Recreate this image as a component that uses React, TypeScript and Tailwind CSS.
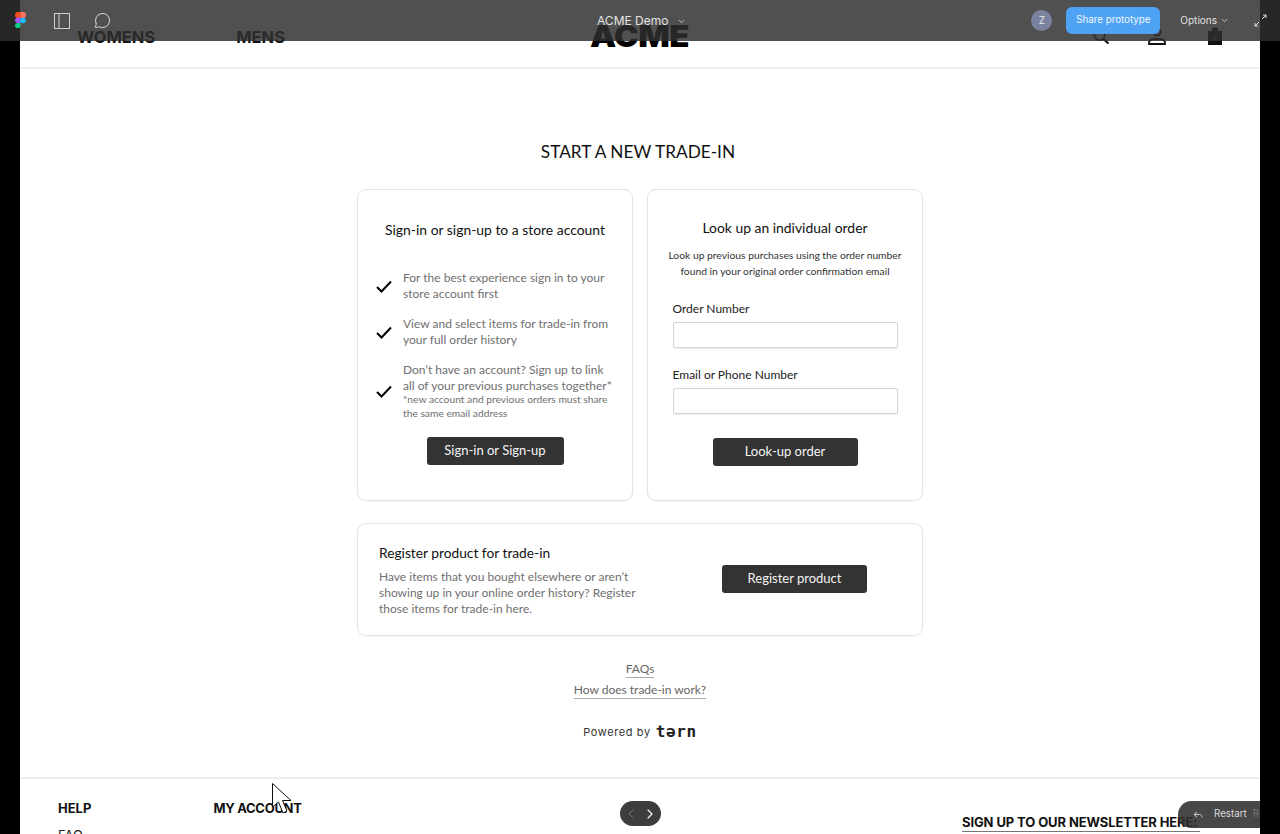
import { ReactElement } from "react";
import { ChevronDown, ChevronLeft, ChevronRight, MessageCircle } from "lucide-react";

const lato = "font-['Lato','Liberation_Sans',sans-serif]";

function Check(): ReactElement {
  return (
    <svg width="16" height="13" viewBox="0 0 16 13" fill="none" className="shrink-0">
      <path d="M1 7l4.5 4.5L15 1.5" stroke="#000" strokeWidth="2" />
    </svg>
  );
}

function DarkButton({ label, width }: { label: string; width: string }): ReactElement {
  return (
    <button className={`${width} h-[28px] bg-[#333333] rounded-[3px] text-[#f5f5f5] text-[13px] text-center`}>
      {label}
    </button>
  );
}

function Field({ label }: { label: string }): ReactElement {
  return (
    <div className="flex flex-col">
      <label className="text-[12px] leading-[17px] text-[#222222] mb-[5px]">{label}</label>
      <input
        type="text"
        className="w-[225px] h-[26px] border border-[#d4d4d4] rounded-[2px] shadow-[0_1px_1px_rgba(0,0,0,0.08)]"
      />
    </div>
  );
}

function Header(): ReactElement {
  return (
    <header className="h-[69px] shrink-0 border-b-2 border-[#eeeeee] flex items-start justify-between pt-[23px] pl-[57px] pr-[38px] relative">
      <nav className="flex gap-[81px] font-['Inter',sans-serif] font-bold text-[16.5px] leading-[29px] text-[#111111]">
        <span>WOMENS</span>
        <span>MENS</span>
      </nav>
      <div className="absolute left-[570px] top-[17px] origin-left font-['Inter',sans-serif] font-black text-[30px] leading-[38px] text-black tracking-[-0.5px] scale-x-[1.1]">
        ACME
      </div>
      <div className="flex items-center h-[26px]">
        <svg width="16" height="15" viewBox="0 0 16 15" fill="none">
          <circle cx="6.5" cy="6" r="5.2" stroke="#111" strokeWidth="1.6" />
          <path d="M10.5 10l5 4.5" stroke="#111" strokeWidth="2.2" />
        </svg>
        <svg width="18" height="18" viewBox="0 0 18 18" fill="none" className="ml-[39px]">
          <circle cx="9" cy="5" r="3.6" stroke="#111" strokeWidth="1.8" />
          <path d="M1 17v-1.5c0-2 3-3.5 8-3.5s8 1.5 8 3.5V17z" stroke="#111" strokeWidth="1.8" />
        </svg>
        <svg width="14" height="18" viewBox="0 0 14 18" className="ml-[42px]">
          <path d="M4 4V2C4 .8 5 .3 7 .3s3 .5 3 1.7V4h4v14H0V4z" fill="#111" />
          <rect x="5.5" y="8" width="3" height="6" fill="#444" />
        </svg>
      </div>
    </header>
  );
}

function SignInCard(): ReactElement {
  const items = [
    "For the best experience sign in to your store account first",
    "View and select items for trade-in from your full order history",
  ];
  return (
    <section className="w-[276px] h-[312px] border border-[#e3e3e3] rounded-[9px] shadow-[0_1px_1px_rgba(0,0,0,0.04)] flex flex-col items-center pt-[30px]">
      <h2 className="text-[13.9px] leading-[20px] text-[#111111]">Sign-in or sign-up to a store account</h2>
      <ul className="mt-[30px] pl-[18px] pr-[14px] w-full flex flex-col gap-[14px] text-[12px] leading-[16px] text-[#6f6f6f]">
        {items.map((item) => (
          <li key={item} className="flex items-center gap-[11px]">
            <Check />
            <p className="w-[215px]">{item}</p>
          </li>
        ))}
        <li className="flex items-center gap-[11px]">
          <Check />
          <div className="w-[220px] whitespace-nowrap">
            <p>Don’t have an account? Sign up to link<br />all of your previous purchases together*</p>
            <p className="-mt-[2px] text-[10.25px] leading-[14px]">*new account and previous orders must share<br />the same email address</p>
          </div>
        </li>
      </ul>
      <div className="mt-[17px]">
        <DarkButton label="Sign-in or Sign-up" width="w-[137px]" />
      </div>
    </section>
  );
}

function LookupCard(): ReactElement {
  return (
    <section className="w-[276px] h-[312px] border border-[#e3e3e3] rounded-[9px] shadow-[0_1px_1px_rgba(0,0,0,0.04)] flex flex-col items-center pt-[28px]">
      <h2 className="text-[13.9px] leading-[20px] text-[#111111]">Look up an individual order</h2>
      <p className="mt-[9px] text-[10.3px] leading-[16px] text-[#333333] text-center whitespace-nowrap">
        Look up previous purchases using the order number<br />found in your original order confirmation email
      </p>
      <div className="mt-[21px] flex flex-col gap-[18px]">
        <Field label="Order Number" />
        <Field label="Email or Phone Number" />
      </div>
      <div className="mt-[24px]">
        <DarkButton label="Look-up order" width="w-[145px]" />
      </div>
    </section>
  );
}

function RegisterCard(): ReactElement {
  return (
    <section className="mt-[22px] w-[566px] h-[113px] border border-[#e3e3e3] rounded-[9px] shadow-[0_1px_1px_rgba(0,0,0,0.04)] flex items-center justify-between pl-[21px] pr-[55px]">
      <div className="w-[270px] mt-[2px]">
        <h2 className="text-[13.75px] leading-[18px] text-[#111111]">Register product for trade-in</h2>
        <p className="mt-[7px] text-[12px] leading-[16px] text-[#6f6f6f] whitespace-nowrap">
          Have items that you bought elsewhere or aren’t<br />showing up in your online order history? Register<br />those items for trade-in here.
        </p>
      </div>
      <div className="-mt-[2px]">
        <DarkButton label="Register product" width="w-[145px]" />
      </div>
    </section>
  );
}

function Footer(): ReactElement {
  return (
    <footer className="mt-[36px] border-t-2 border-[#eeeeee] flex-1 relative pl-[38px] pt-[21px] font-['Inter',sans-serif] font-bold text-[13px] text-[#111111]">
      <div className="flex gap-[122px] leading-[17px]">
        <div>
          <div>HELP</div>
          <div className="mt-[10px] font-normal text-[#222222]">FAQ</div>
        </div>
        <div className="tracking-[-0.3px]">MY ACCOUNT</div>
      </div>
      <div className="absolute left-[942px] top-[35px] w-[238px] border-b border-[#777777] leading-[17px] whitespace-nowrap tracking-[-0.1px]">
        SIGN UP TO OUR NEWSLETTER HERE:
      </div>
    </footer>
  );
}

function PrototypeBar(): ReactElement {
  return (
    <div className="absolute inset-x-0 top-0 h-[41px] bg-[#2f2f2f]/[0.84] flex items-center justify-between font-['Inter',sans-serif] text-white">
      <div className="flex items-center pl-[15px]">
        <svg width="11" height="17" viewBox="0 0 11 17">
          <path d="M0 3a3 3 0 0 1 3-3h2.5v6H3a3 3 0 0 1-3-3z" fill="#f24e1e" />
          <path d="M5.5 0H8a3 3 0 0 1 0 6H5.5z" fill="#ff7262" />
          <path d="M0 8.5a3 3 0 0 1 3-3h2.5v5.500H3a3 3 0 0 1-3-2.500z" fill="#a259ff" />
          <circle cx="8" cy="8.5" r="2.8" fill="#1abcfe" />
          <path d="M0 14a3 3 0 0 1 3-3h2.5v3a2.8 2.8 0 0 1-5.500 0z" fill="#0acf83" />
        </svg>
        <svg width="16" height="16" viewBox="0 0 16 16" fill="none" className="ml-[28px]">
          <rect x=".5" y=".5" width="15" height="15" stroke="#cfcfcf" />
          <path d="M5 .5v15" stroke="#cfcfcf" />
        </svg>
        <MessageCircle size={17} strokeWidth={1.3} className="ml-[24px] text-[#e5e5e5]" />
      </div>
      <div className="absolute left-[597px] top-[13px] flex items-center gap-[9px] text-[12px] leading-[16px] text-[#e2e2e2]">
        <span>ACME Demo</span>
        <ChevronDown size={9} strokeWidth={2} />
      </div>
      <div className="flex items-center pr-[13px]">
        <div className="w-[21px] h-[21px] rounded-full bg-[#7b82a0] text-[10px] text-center leading-[21px] text-[#e8e8e8]">Z</div>
        <button className="ml-[14px] w-[94px] h-[27px] rounded-[6px] bg-[#4ea3f5] text-[9.75px] text-[#f2f8ff] text-center">Share prototype</button>
        <span className="ml-[20px] text-[10px] text-[#e2e2e2]">Options</span>
        <ChevronDown size={9} strokeWidth={2} className="ml-[3px] text-[#e2e2e2]" />
        <svg width="13" height="13" viewBox="0 0 13 13" fill="none" className="ml-[25px]" stroke="#e2e2e2" strokeWidth="1">
          <path d="M8 5l4-4M9 1h3v3M5 8l-4 4M1 9v3h3" />
        </svg>
      </div>
    </div>
  );
}

export default function App(): ReactElement {
  return (
    <div className="relative h-[834px] w-[1280px] overflow-hidden bg-black">
      <div className={`mx-[20px] h-full bg-white flex flex-col ${lato}`}>
        <Header />
        <main className="flex flex-col items-center">
          <h1 className="mt-[71px] -ml-[4px] text-[17.25px] leading-[24px] text-[#111111]">START A NEW TRADE-IN</h1>
          <div className="mt-[25px] flex gap-[14px]">
            <SignInCard />
            <LookupCard />
          </div>
          <RegisterCard />
          <a className="mt-[24px] text-[12px] leading-[17px] text-[#666666] border-b border-[#aaaaaa]">FAQs</a>
          <a className="mt-[3px] text-[12px] leading-[17px] text-[#666666] border-b border-[#aaaaaa]">How does trade-in work?</a>
          <div className="mt-[24px] flex items-center gap-[5px]">
            <span className="font-['Inter',sans-serif] text-[11px] tracking-[0.6px] text-[#333333]">Powered by</span>
            <span className="font-['DejaVu_Sans_Mono',monospace] font-bold text-[16px] leading-[18px] tracking-[0.6px] text-[#222222]">tərn</span>
          </div>
        </main>
        <Footer />
      </div>

      <PrototypeBar />

      {/* prototype controls floating over the frame */}
      <div className="absolute left-[620px] top-[801px] w-[41px] h-[25px] rounded-full bg-[#3d3d3d] flex items-center justify-center gap-[3px] text-white">
        <ChevronLeft size={16} strokeWidth={1.4} className="text-[#777777]" />
        <ChevronRight size={16} strokeWidth={1.6} />
      </div>
      <div className="absolute left-[1178px] top-[801px] w-[82px] h-[27px] rounded-l-full bg-[#2f2f2f]/[0.88] overflow-hidden flex items-center pl-[15px] font-['Inter',sans-serif] text-[9.75px] text-[#dddddd] whitespace-nowrap">
        <svg width="10" height="8" viewBox="0 0 10 8" fill="none" stroke="#cccccc" className="shrink-0">
          <path d="M4 1L1 3.5 4 6M1 3.5h5.5c1.5 0 2.5 1 2.5 3" />
        </svg>
        <span className="ml-[11px]">Restart</span>
        <span className="ml-[6px] text-[#777777]">R</span>
      </div>
      <svg width="22" height="34" viewBox="0 0 22 34" fill="none" className="absolute left-[271px] top-[782px]">
        <path d="M1.5 1.5V25l6-5 4.5 11 4-2-4.5-10.500H20z" fill="#fff" stroke="#111" strokeWidth="1" />
      </svg>
    </div>
  );
}
